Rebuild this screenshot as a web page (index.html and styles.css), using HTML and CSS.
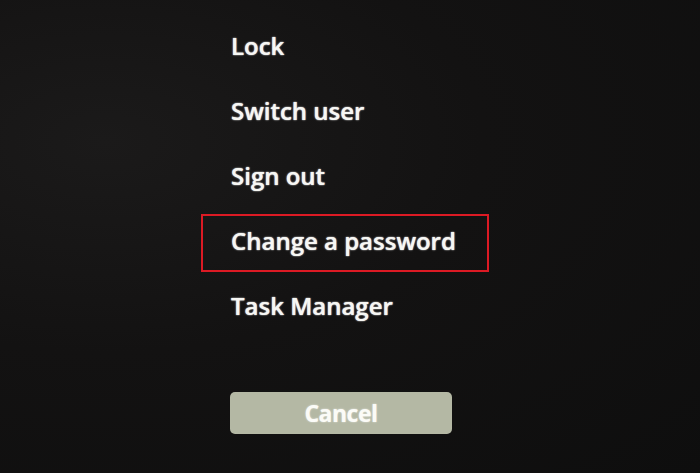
FILE: index.html
```html
<!DOCTYPE html>
<html lang="en">
<head>
<meta charset="utf-8">
<title>Options</title>
<link rel="stylesheet" href="styles.css">
</head>
<body>
<main class="screen">
  <ul class="menu">
    <li class="item">Lock</li>
    <li class="item">Switch user</li>
    <li class="item">Sign out</li>
    <li class="item item-marked">Change a password</li>
    <li class="item">Task Manager</li>
  </ul>
  <button class="cancel" type="button">Cancel</button>
</main>
</body>
</html>
```

FILE: styles.css
```css
html, body {
  margin: 0;
  padding: 0;
  height: 100%;
}
body {
  background: radial-gradient(ellipse at 15% 30%, #1b1a1a 0%, #131212 45%, #0e0e0e 100%);
  font-family: "Open Sans", "DejaVu Sans", sans-serif;
  overflow: hidden;
}
.screen {
  display: flex;
  flex-direction: column;
  align-items: flex-start;
  padding: 19px 0 0 201px;
}
.menu {
  list-style: none;
  margin: 0;
  padding: 0;
  display: flex;
  flex-direction: column;
  gap: 7px;
}
.item {
  box-sizing: border-box;
  height: 58px;
  width: 288px;
  border: 2px solid transparent;
  padding: 10px 0 0 28px;
  font-size: 24px;
  font-weight: 600;
  line-height: 30px;
  color: #f7f7f4;
  text-shadow: 0 0 2px rgba(255,255,255,0.6), 0 0 1px rgba(255,255,255,0.8);
}
.item.item-marked {
  border: 2px solid #dc1a24;
}
.cancel {
  margin: 55px 0 0 29px;
  width: 222px;
  height: 42px;
  border: none;
  border-radius: 5px;
  background: #b4b8a4;
  color: #fbfbf7;
  font-family: "Open Sans", "DejaVu Sans", sans-serif;
  font-size: 23px;
  font-weight: 700;
  letter-spacing: -0.5px;
  line-height: 40px;
  text-shadow: 0 0 2px rgba(255,255,255,0.7);
  padding: 0;
}
```
